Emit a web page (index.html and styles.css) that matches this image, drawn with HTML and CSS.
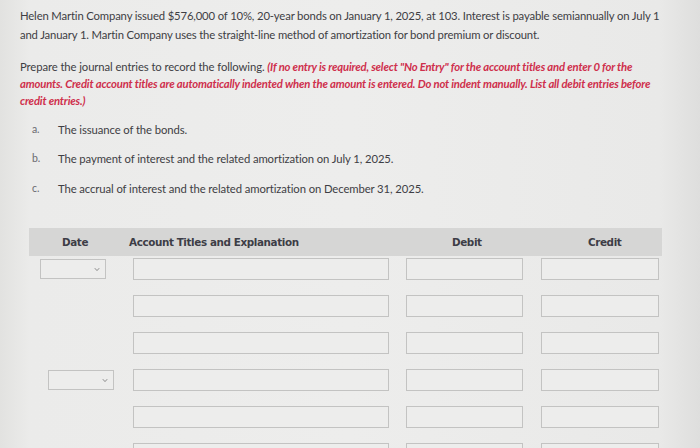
FILE: index.html
```html
<!DOCTYPE html>
<html>
<head>
<meta charset="utf-8">
<link rel="stylesheet" href="styles.css">
</head>
<body>
<div class="page">
  <p class="intro">Helen Martin Company issued $576,000 of 10%, 20-year bonds on January 1, 2025, at 103. Interest is payable semiannually on July 1<br>and January 1. Martin Company uses the straight-line method of amortization for bond premium or discount.</p>
  <p class="task">Prepare the journal entries to record the following. <span class="note">(If no entry is required, select "No Entry" for the account titles and enter 0 for the<br>amounts. Credit account titles are automatically indented when the amount is entered. Do not indent manually. List all debit entries before<br>credit entries.)</span></p>
  <ol class="items">
    <li class="item"><span class="mark">a.</span><span>The issuance of the bonds.</span></li>
    <li class="item item-b"><span class="mark">b.</span><span>The payment of interest and the related amortization on July 1, 2025.</span></li>
    <li class="item item-c"><span class="mark">c.</span><span>The accrual of interest and the related amortization on December 31, 2025.</span></li>
  </ol>
  <div class="journal">
    <div class="head">
      <div class="h-date">Date</div>
      <div class="h-acct">Account Titles and Explanation</div>
      <div class="h-debit">Debit</div>
      <div class="h-credit">Credit</div>
    </div>
    <div class="rows">
      <div class="row">
        <div class="c-date"><div class="select"><svg width="6" height="5" viewBox="0 0 6 5"><path d="M0.8 1.2 L3 3.6 L5.2 1.2" fill="none" stroke="#8a8a8a" stroke-width="1"/></svg></div></div>
        <div class="field acct"></div><div class="field debit"></div><div class="field credit"></div>
      </div>
      <div class="row">
        <div class="c-date"></div>
        <div class="field acct"></div><div class="field debit"></div><div class="field credit"></div>
      </div>
      <div class="row">
        <div class="c-date"></div>
        <div class="field acct"></div><div class="field debit"></div><div class="field credit"></div>
      </div>
      <div class="row">
        <div class="c-date"><div class="select select-2"><svg width="6" height="5" viewBox="0 0 6 5"><path d="M0.8 1.2 L3 3.6 L5.2 1.2" fill="none" stroke="#8a8a8a" stroke-width="1"/></svg></div></div>
        <div class="field acct"></div><div class="field debit"></div><div class="field credit"></div>
      </div>
      <div class="row">
        <div class="c-date"></div>
        <div class="field acct"></div><div class="field debit"></div><div class="field credit"></div>
      </div>
      <div class="row">
        <div class="c-date"></div>
        <div class="field acct"></div><div class="field debit"></div><div class="field credit"></div>
      </div>
    </div>
  </div>
</div>
</body>
</html>
```
FILE: styles.css
```css
html, body {
  margin: 0;
  padding: 0;
}
body {
  width: 700px;
  height: 448px;
  overflow: hidden;
  background: linear-gradient(90deg, #e2e2e0 0px, #ebebea 30px, #ededec 350px, #e9e9e8 660px, #dededd 700px);
  font-family: Lato, "Open Sans", sans-serif;
  color: #3e3e44;
}
.page {
  padding: 6px 0 0 20px;
}
.intro {
  margin: 0;
  font-size: 11.3px;
  line-height: 19px;
  letter-spacing: -0.15px;
  white-space: nowrap;
}
.task {
  margin: 14px 0 0 0;
  font-size: 11.3px;
  line-height: 17px;
  letter-spacing: -0.1px;
  white-space: nowrap;
}
.note {
  color: #cf2f4c;
  font-style: italic;
  font-weight: 700;
  letter-spacing: -0.18px;
}
.items {
  list-style: none;
  margin: 12px 0 0 0;
  padding: 0 0 0 12px;
  font-size: 11.3px;
  letter-spacing: -0.1px;
}
.item {
  display: flex;
  height: 17px;
  line-height: 17px;
}
.item-b { margin-top: 12px; }
.item-c { margin-top: 13px; }
.mark {
  width: 26px;
  color: #6a6a70;
  font-size: 10.5px;
}
.journal {
  margin: 31px 0 0 9px;
  width: 633px;
}
.head {
  display: flex;
  align-items: center;
  height: 28px;
  background: #d6d6d5;
  font-family: "DejaVu Sans", Verdana, sans-serif;
  font-weight: 700;
  font-size: 10.4px;
  letter-spacing: -0.4px;
  color: #3d3d46;
}
.h-date { width: 100px; padding-left: 33px; box-sizing: border-box; }
.h-acct { width: 323px; }
.h-debit { width: 136px; }
.h-credit { flex: 1; }
.rows {
  display: flex;
  flex-direction: column;
  gap: 15px;
  padding-top: 2px;
}
.row {
  display: flex;
  align-items: center;
  height: 22px;
}
.c-date {
  width: 104px;
  padding-left: 11px;
  box-sizing: border-box;
}
.select {
  width: 66px;
  height: 20px;
  box-sizing: border-box;
  border: 1px solid #c3c3c2;
  background: #ededec;
  display: flex;
  align-items: center;
  justify-content: flex-end;
  padding-right: 5px;
}
.select-2 { margin-left: 8px; }
.field {
  height: 22px;
  box-sizing: border-box;
  border: 1px solid #c3c3c2;
  background: #ededec;
}
.acct { width: 256px; }
.debit { width: 117px; margin-left: 17px; }
.credit { width: 118px; margin-left: 18px; }
```
